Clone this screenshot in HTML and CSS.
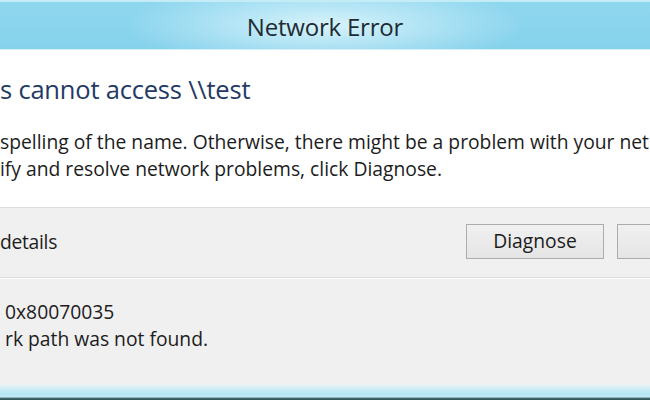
FILE: index.html
```html
<!DOCTYPE html>
<html>
<head>
<meta charset="utf-8">
<link rel="stylesheet" href="styles.css">
</head>
<body>
<div class="dialog">
  <div class="titlebar"><span class="title">Network Error</span></div>
  <div class="content">
    <div class="heading">s cannot access \\test</div>
    <div class="message">
      <div class="line">spelling of the name. Otherwise, there might be a problem with your net</div>
      <div class="line">ify and resolve network problems, click Diagnose.</div>
    </div>
  </div>
  <div class="actions">
    <span class="toggle">details</span>
    <div class="buttons">
      <button class="btn">Diagnose</button>
      <button class="btn btn-cut"></button>
    </div>
  </div>
  <div class="details">
    <div class="line">0x80070035</div>
    <div class="line">rk path was not found.</div>
  </div>
  <div class="frame-bottom"></div>
</div>
</body>
</html>
```
FILE: styles.css
```css
html, body {
  margin: 0;
  padding: 0;
}
body {
  width: 650px;
  height: 400px;
  overflow: hidden;
  background: #f0f0f0;
  font-family: "Open Sans", "Noto Sans", sans-serif;
}
.dialog {
  display: flex;
  flex-direction: column;
  height: 400px;
  overflow: hidden;
}
.titlebar {
  height: 50px;
  box-sizing: border-box;
  border-top: 2px solid #c4ecf6;
  background:
    radial-gradient(ellipse 200px 42px at 50% 50%, rgba(235, 250, 255, 0.8), rgba(235, 250, 255, 0) 100%),
    linear-gradient(#8fd7ef, #86d2ec);
  display: flex;
  align-items: center;
  justify-content: center;
  border-bottom: 1px solid #d6f0f8;
}
.title {
  font-size: 24px;
  color: #1e2b33;
  letter-spacing: -0.2px;
  margin-top: 2px;
}
.content {
  background: #ffffff;
  height: 158px;
  box-sizing: border-box;
  padding-top: 22px;
  border-bottom: 1px solid #dcdcdc;
  overflow: hidden;
}
.heading {
  font-size: 25.5px;
  color: #233a66;
  line-height: 34px;
  white-space: nowrap;
  letter-spacing: -0.2px;
}
.message {
  margin-top: 22px;
  font-size: 19.3px;
  color: #1c1c1c;
  line-height: 27px;
  white-space: nowrap;
  overflow: hidden;
}
.actions {
  height: 70px;
  box-sizing: border-box;
  display: flex;
  align-items: center;
  justify-content: space-between;
  border-bottom: 1px solid #dcdcdc;
  box-shadow: 0 1px 0 #ffffff;
  padding-bottom: 2px;
}
.toggle {
  font-size: 19.3px;
  color: #1c1c1c;
  letter-spacing: -0.3px;
}
.buttons {
  display: flex;
  gap: 13px;
}
.btn {
  width: 138px;
  height: 35px;
  box-sizing: border-box;
  border: 1px solid #acacac;
  background: linear-gradient(#f0f0f0, #e5e5e5);
  font-family: inherit;
  font-size: 19.3px;
  color: #1c1c1c;
  padding: 0 0 2px;
}
.btn-cut {
  width: 33px;
  border-right: none;
}
.details {
  flex: 1;
  padding-top: 20px;
  padding-left: 5px;
  font-size: 19.3px;
  color: #1c1c1c;
  line-height: 27px;
  white-space: nowrap;
}
.frame-bottom {
  height: 16px;
  background: linear-gradient(#eef3f5 0, #cfecf5 30%, #b6e6f3 60%, #c0eaf4 82%, #466a6e 88%, #2f5256 100%);
}
```
